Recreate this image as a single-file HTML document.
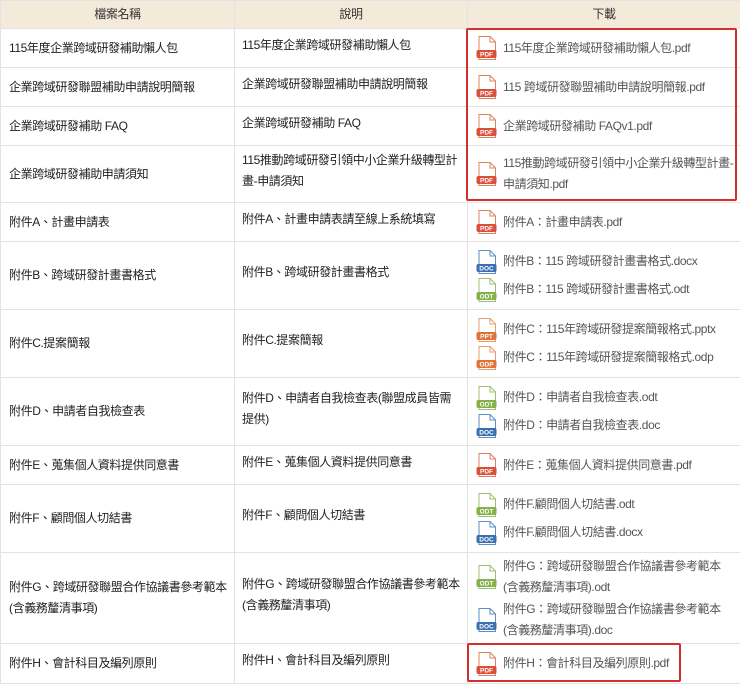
<!DOCTYPE html>
<html><head><meta charset="utf-8"><style>
*{margin:0;padding:0;box-sizing:border-box}
body{width:740px;height:683px;background:#fff;font-family:"Liberation Sans","Noto Sans CJK TC",sans-serif;font-size:12px;letter-spacing:-0.4px;color:#222;overflow:hidden;position:relative}
table{border-collapse:collapse;width:740px;table-layout:fixed}
td,th{border:1px solid #e3e3e3;vertical-align:middle;line-height:21px}
th{background:#f3ead9;font-weight:normal;color:#333;height:28px;text-align:center}
td.a{padding:0 6px 0 8px}
td.b{padding:0 6px 6px 7px}
td.c{padding:0 2px 0 8px;color:#555}
.f{display:flex;align-items:center;min-height:28px}
.f svg{flex:none;margin-right:5px}
.box{position:absolute;border:2px solid #d32f2f;border-radius:2px}
</style></head><body>
<table>
<colgroup><col style="width:234px"><col style="width:233px"><col style="width:273px"></colgroup>
<tr><th>檔案名稱</th><th>說明</th><th>下載</th></tr>
<tr style="height:39px"><td class="a">115年度企業跨域研發補助懶人包</td><td class="b">115年度企業跨域研發補助懶人包</td><td class="c"><div class="f"><svg width="22" height="26" viewBox="0 0 22 26"><path d="M3 1.5h11l5.5 5.5v17.5h-16.5z" fill="#fff" stroke="#e08060"/><path d="M14 1.5v5.5h5.5" fill="none" stroke="#e08060"/><rect x="0.5" y="15" width="20" height="8" rx="2" fill="#d9503a"/><text x="10.5" y="21.5" font-size="6.5" font-weight="bold" fill="#fff" text-anchor="middle" font-family="Liberation Sans,sans-serif" letter-spacing="0">PDF</text></svg><span>115年度企業跨域研發補助懶人包.pdf</span></div></td></tr>
<tr style="height:39px"><td class="a">企業跨域研發聯盟補助申請說明簡報</td><td class="b">企業跨域研發聯盟補助申請說明簡報</td><td class="c"><div class="f"><svg width="22" height="26" viewBox="0 0 22 26"><path d="M3 1.5h11l5.5 5.5v17.5h-16.5z" fill="#fff" stroke="#e08060"/><path d="M14 1.5v5.5h5.5" fill="none" stroke="#e08060"/><rect x="0.5" y="15" width="20" height="8" rx="2" fill="#d9503a"/><text x="10.5" y="21.5" font-size="6.5" font-weight="bold" fill="#fff" text-anchor="middle" font-family="Liberation Sans,sans-serif" letter-spacing="0">PDF</text></svg><span>115 跨域研發聯盟補助申請說明簡報.pdf</span></div></td></tr>
<tr style="height:39px"><td class="a">企業跨域研發補助 FAQ</td><td class="b">企業跨域研發補助 FAQ</td><td class="c"><div class="f"><svg width="22" height="26" viewBox="0 0 22 26"><path d="M3 1.5h11l5.5 5.5v17.5h-16.5z" fill="#fff" stroke="#e08060"/><path d="M14 1.5v5.5h5.5" fill="none" stroke="#e08060"/><rect x="0.5" y="15" width="20" height="8" rx="2" fill="#d9503a"/><text x="10.5" y="21.5" font-size="6.5" font-weight="bold" fill="#fff" text-anchor="middle" font-family="Liberation Sans,sans-serif" letter-spacing="0">PDF</text></svg><span>企業跨域研發補助 FAQv1.pdf</span></div></td></tr>
<tr style="height:57px"><td class="a">企業跨域研發補助申請須知</td><td class="b">115推動跨域研發引領中小企業升級轉型計畫-申請須知</td><td class="c"><div class="f"><svg width="22" height="26" viewBox="0 0 22 26"><path d="M3 1.5h11l5.5 5.5v17.5h-16.5z" fill="#fff" stroke="#e08060"/><path d="M14 1.5v5.5h5.5" fill="none" stroke="#e08060"/><rect x="0.5" y="15" width="20" height="8" rx="2" fill="#d9503a"/><text x="10.5" y="21.5" font-size="6.5" font-weight="bold" fill="#fff" text-anchor="middle" font-family="Liberation Sans,sans-serif" letter-spacing="0">PDF</text></svg><span>115推動跨域研發引領中小企業升級轉型計畫-申請須知.pdf</span></div></td></tr>
<tr style="height:39px"><td class="a">附件A、計畫申請表</td><td class="b">附件A、計畫申請表請至線上系統填寫</td><td class="c"><div class="f"><svg width="22" height="26" viewBox="0 0 22 26"><path d="M3 1.5h11l5.5 5.5v17.5h-16.5z" fill="#fff" stroke="#e08060"/><path d="M14 1.5v5.5h5.5" fill="none" stroke="#e08060"/><rect x="0.5" y="15" width="20" height="8" rx="2" fill="#d9503a"/><text x="10.5" y="21.5" font-size="6.5" font-weight="bold" fill="#fff" text-anchor="middle" font-family="Liberation Sans,sans-serif" letter-spacing="0">PDF</text></svg><span>附件A：計畫申請表.pdf</span></div></td></tr>
<tr style="height:68px"><td class="a">附件B、跨域研發計畫書格式</td><td class="b">附件B、跨域研發計畫書格式</td><td class="c"><div class="f"><svg width="22" height="26" viewBox="0 0 22 26"><path d="M3 1.5h11l5.5 5.5v17.5h-16.5z" fill="#fff" stroke="#5b8fc7"/><path d="M14 1.5v5.5h5.5" fill="none" stroke="#5b8fc7"/><rect x="0.5" y="15" width="20" height="8" rx="2" fill="#3a6fb0"/><text x="10.5" y="21.5" font-size="6.5" font-weight="bold" fill="#fff" text-anchor="middle" font-family="Liberation Sans,sans-serif" letter-spacing="0">DOC</text></svg><span>附件B：115 跨域研發計畫書格式.docx</span></div><div class="f"><svg width="22" height="26" viewBox="0 0 22 26"><path d="M3 1.5h11l5.5 5.5v17.5h-16.5z" fill="#fff" stroke="#9cc06a"/><path d="M14 1.5v5.5h5.5" fill="none" stroke="#9cc06a"/><rect x="0.5" y="15" width="20" height="8" rx="2" fill="#86b04a"/><text x="10.5" y="21.5" font-size="6.5" font-weight="bold" fill="#fff" text-anchor="middle" font-family="Liberation Sans,sans-serif" letter-spacing="0">ODT</text></svg><span>附件B：115 跨域研發計畫書格式.odt</span></div></td></tr>
<tr style="height:68px"><td class="a">附件C.提案簡報</td><td class="b">附件C.提案簡報</td><td class="c"><div class="f"><svg width="22" height="26" viewBox="0 0 22 26"><path d="M3 1.5h11l5.5 5.5v17.5h-16.5z" fill="#fff" stroke="#eb9a6a"/><path d="M14 1.5v5.5h5.5" fill="none" stroke="#eb9a6a"/><rect x="0.5" y="15" width="20" height="8" rx="2" fill="#e0733a"/><text x="10.5" y="21.5" font-size="6.5" font-weight="bold" fill="#fff" text-anchor="middle" font-family="Liberation Sans,sans-serif" letter-spacing="0">PPT</text></svg><span>附件C：115年跨域研發提案簡報格式.pptx</span></div><div class="f"><svg width="22" height="26" viewBox="0 0 22 26"><path d="M3 1.5h11l5.5 5.5v17.5h-16.5z" fill="#fff" stroke="#eb9a6a"/><path d="M14 1.5v5.5h5.5" fill="none" stroke="#eb9a6a"/><rect x="0.5" y="15" width="20" height="8" rx="2" fill="#e0733a"/><text x="10.5" y="21.5" font-size="6.5" font-weight="bold" fill="#fff" text-anchor="middle" font-family="Liberation Sans,sans-serif" letter-spacing="0">ODP</text></svg><span>附件C：115年跨域研發提案簡報格式.odp</span></div></td></tr>
<tr style="height:68px"><td class="a">附件D、申請者自我檢查表</td><td class="b">附件D、申請者自我檢查表(聯盟成員皆需提供)</td><td class="c"><div class="f"><svg width="22" height="26" viewBox="0 0 22 26"><path d="M3 1.5h11l5.5 5.5v17.5h-16.5z" fill="#fff" stroke="#9cc06a"/><path d="M14 1.5v5.5h5.5" fill="none" stroke="#9cc06a"/><rect x="0.5" y="15" width="20" height="8" rx="2" fill="#86b04a"/><text x="10.5" y="21.5" font-size="6.5" font-weight="bold" fill="#fff" text-anchor="middle" font-family="Liberation Sans,sans-serif" letter-spacing="0">ODT</text></svg><span>附件D：申請者自我檢查表.odt</span></div><div class="f"><svg width="22" height="26" viewBox="0 0 22 26"><path d="M3 1.5h11l5.5 5.5v17.5h-16.5z" fill="#fff" stroke="#5b8fc7"/><path d="M14 1.5v5.5h5.5" fill="none" stroke="#5b8fc7"/><rect x="0.5" y="15" width="20" height="8" rx="2" fill="#3a6fb0"/><text x="10.5" y="21.5" font-size="6.5" font-weight="bold" fill="#fff" text-anchor="middle" font-family="Liberation Sans,sans-serif" letter-spacing="0">DOC</text></svg><span>附件D：申請者自我檢查表.doc</span></div></td></tr>
<tr style="height:39px"><td class="a">附件E、蒐集個人資料提供同意書</td><td class="b">附件E、蒐集個人資料提供同意書</td><td class="c"><div class="f"><svg width="22" height="26" viewBox="0 0 22 26"><path d="M3 1.5h11l5.5 5.5v17.5h-16.5z" fill="#fff" stroke="#e08060"/><path d="M14 1.5v5.5h5.5" fill="none" stroke="#e08060"/><rect x="0.5" y="15" width="20" height="8" rx="2" fill="#d9503a"/><text x="10.5" y="21.5" font-size="6.5" font-weight="bold" fill="#fff" text-anchor="middle" font-family="Liberation Sans,sans-serif" letter-spacing="0">PDF</text></svg><span>附件E：蒐集個人資料提供同意書.pdf</span></div></td></tr>
<tr style="height:68px"><td class="a">附件F、顧問個人切結書</td><td class="b">附件F、顧問個人切結書</td><td class="c"><div class="f"><svg width="22" height="26" viewBox="0 0 22 26"><path d="M3 1.5h11l5.5 5.5v17.5h-16.5z" fill="#fff" stroke="#9cc06a"/><path d="M14 1.5v5.5h5.5" fill="none" stroke="#9cc06a"/><rect x="0.5" y="15" width="20" height="8" rx="2" fill="#86b04a"/><text x="10.5" y="21.5" font-size="6.5" font-weight="bold" fill="#fff" text-anchor="middle" font-family="Liberation Sans,sans-serif" letter-spacing="0">ODT</text></svg><span>附件F.顧問個人切結書.odt</span></div><div class="f"><svg width="22" height="26" viewBox="0 0 22 26"><path d="M3 1.5h11l5.5 5.5v17.5h-16.5z" fill="#fff" stroke="#5b8fc7"/><path d="M14 1.5v5.5h5.5" fill="none" stroke="#5b8fc7"/><rect x="0.5" y="15" width="20" height="8" rx="2" fill="#3a6fb0"/><text x="10.5" y="21.5" font-size="6.5" font-weight="bold" fill="#fff" text-anchor="middle" font-family="Liberation Sans,sans-serif" letter-spacing="0">DOC</text></svg><span>附件F.顧問個人切結書.docx</span></div></td></tr>
<tr style="height:91px"><td class="a">附件G、跨域研發聯盟合作協議書參考範本(含義務釐清事項)</td><td class="b">附件G、跨域研發聯盟合作協議書參考範本(含義務釐清事項)</td><td class="c"><div class="f" style="min-height:43px"><svg width="22" height="26" viewBox="0 0 22 26"><path d="M3 1.5h11l5.5 5.5v17.5h-16.5z" fill="#fff" stroke="#9cc06a"/><path d="M14 1.5v5.5h5.5" fill="none" stroke="#9cc06a"/><rect x="0.5" y="15" width="20" height="8" rx="2" fill="#86b04a"/><text x="10.5" y="21.5" font-size="6.5" font-weight="bold" fill="#fff" text-anchor="middle" font-family="Liberation Sans,sans-serif" letter-spacing="0">ODT</text></svg><span>附件G：跨域研發聯盟合作協議書參考範本 (含義務釐清事項).odt</span></div><div class="f" style="min-height:43px"><svg width="22" height="26" viewBox="0 0 22 26"><path d="M3 1.5h11l5.5 5.5v17.5h-16.5z" fill="#fff" stroke="#5b8fc7"/><path d="M14 1.5v5.5h5.5" fill="none" stroke="#5b8fc7"/><rect x="0.5" y="15" width="20" height="8" rx="2" fill="#3a6fb0"/><text x="10.5" y="21.5" font-size="6.5" font-weight="bold" fill="#fff" text-anchor="middle" font-family="Liberation Sans,sans-serif" letter-spacing="0">DOC</text></svg><span>附件G：跨域研發聯盟合作協議書參考範本 (含義務釐清事項).doc</span></div></td></tr>
<tr style="height:40px"><td class="a">附件H、會計科目及編列原則</td><td class="b">附件H、會計科目及編列原則</td><td class="c"><div class="f"><svg width="22" height="26" viewBox="0 0 22 26"><path d="M3 1.5h11l5.5 5.5v17.5h-16.5z" fill="#fff" stroke="#e08060"/><path d="M14 1.5v5.5h5.5" fill="none" stroke="#e08060"/><rect x="0.5" y="15" width="20" height="8" rx="2" fill="#d9503a"/><text x="10.5" y="21.5" font-size="6.5" font-weight="bold" fill="#fff" text-anchor="middle" font-family="Liberation Sans,sans-serif" letter-spacing="0">PDF</text></svg><span>附件H：會計科目及編列原則.pdf</span></div></td></tr>
</table>
<div class="box" style="left:466px;top:28px;width:271px;height:173px"></div>
<div class="box" style="left:467px;top:643px;width:214px;height:39px"></div>
</body></html>
